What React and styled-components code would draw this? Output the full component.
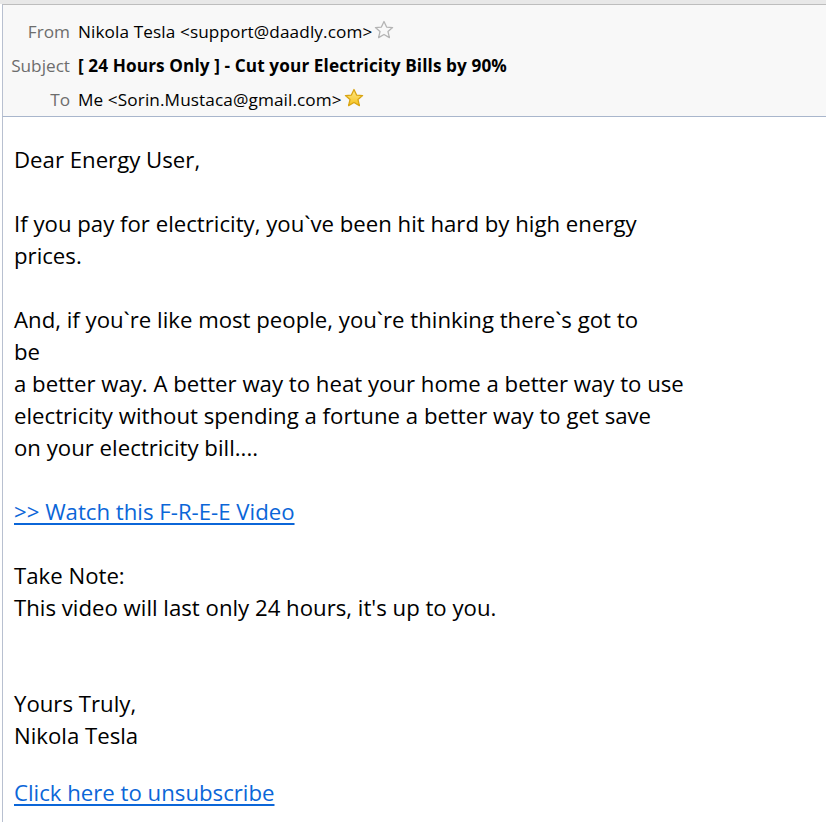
import React from "react";
import { styled, createGlobalStyle } from "styled-components";

const GlobalStyle = createGlobalStyle`
  html, body {
    margin: 0;
    padding: 0;
    background: #ffffff;
  }
  body {
    font-family: "Open Sans", "Noto Sans", sans-serif;
  }
`;

const StarIcon = ({ filled }) => (
  <svg width="20" height="20" viewBox="0 0 20 20">
    <defs>
      <linearGradient id="starFill" x1="0" y1="0" x2="0" y2="1">
        <stop offset="0" stopColor="#ffe88a" />
        <stop offset="1" stopColor="#f5c21b" />
      </linearGradient>
    </defs>
    <path
      d="M10 1.5 L12.6 7.1 L18.6 7.6 L14 11.6 L15.4 17.6 L10 14.5 L4.6 17.6 L6 11.6 L1.4 7.6 L7.4 7.1 Z"
      fill={filled ? "url(#starFill)" : "none"}
      stroke={filled ? "#d9a514" : "#b4b4b4"}
      strokeWidth="1.3"
      strokeLinejoin="round"
    />
  </svg>
);

const App = () => {
  return (
    <>
      <GlobalStyle />
      <Window>
        <Header>
          <Row>
            <Label>From</Label>
            <Value>Nikola Tesla &lt;support@daadly.com&gt;</Value>
            <Star>
              <StarIcon />
            </Star>
          </Row>
          <Row>
            <Label>Subject</Label>
            <Value $bold>[ 24 Hours Only ] - Cut your Electricity Bills by 90%</Value>
          </Row>
          <Row>
            <Label>To</Label>
            <Value>Me &lt;Sorin.Mustaca@gmail.com&gt;</Value>
            <Star>
              <StarIcon filled />
            </Star>
          </Row>
        </Header>
        <Body>
          <Line>Dear Energy User,</Line>
          <Gap />
          <Line>If you pay for electricity, you`ve been hit hard by high energy</Line>
          <Line>prices.</Line>
          <Gap />
          <Line>And, if you`re like most people, you`re thinking there`s got to</Line>
          <Line>be</Line>
          <Line>a better way. A better way to heat your home a better way to use</Line>
          <Line>electricity without spending a fortune a better way to get save</Line>
          <Line>on your electricity bill....</Line>
          <Gap />
          <Line>
            <Link href="#">&gt;&gt; Watch this F-R-E-E Video</Link>
          </Line>
          <Gap />
          <Line>Take Note:</Line>
          <Line>This video will last only 24 hours, it's up to you.</Line>
          <Gap />
          <Gap />
          <Line>Yours Truly,</Line>
          <Line>Nikola Tesla</Line>
          <Gap $h={25} />
          <Line>
            <Link href="#">Click here to unsubscribe</Link>
          </Line>
        </Body>
      </Window>
    </>
  );
};

export default App;

const Window = styled.div`
  width: 826px;
  height: 822px;
  overflow: hidden;
  background: #ffffff;
  border-top: 4px solid #e8e8e8;
  box-sizing: border-box;
`;

const Header = styled.div`
  background: #f8f8f8;
  border-top: 1px solid #bdbdbd;
  border-bottom: 1px solid #a9b6cc;
  border-left: 1px solid #b8c0d0;
  margin-left: 2px;
  padding: 9px 0 0 0;
  display: flex;
  flex-direction: column;
`;

const Row = styled.div`
  display: flex;
  align-items: center;
  height: 34px;
  font-size: 17.2px;
  color: #000;
  white-space: nowrap;
`;

const Label = styled.span`
  width: 67px;
  padding-right: 8px;
  text-align: right;
  color: #6d6d6d;
  flex-shrink: 0;
`;

const Value = styled.span`
  font-weight: ${(p) => (p.$bold ? 700 : 400)};
  letter-spacing: ${(p) => (p.$bold ? "0.1px" : "0.1px")};
`;

const Star = styled.span`
  display: inline-flex;
  margin-left: 2px;
  position: relative;
  top: -1px;
`;

const Body = styled.div`
  margin-left: 2px;
  border-left: 1px solid #b8c0d0;
  height: 100%;
  padding: 27px 0 0 11px;
  font-size: 22.2px;
  line-height: 32px;
  color: #000;
`;

const Line = styled.div`
  white-space: nowrap;
`;

const Gap = styled.div`
  height: ${(p) => p.$h || 32}px;
`;

const Link = styled.a`
  color: #0b66d8;
  text-decoration: underline;
  text-underline-offset: 3px;
`;
